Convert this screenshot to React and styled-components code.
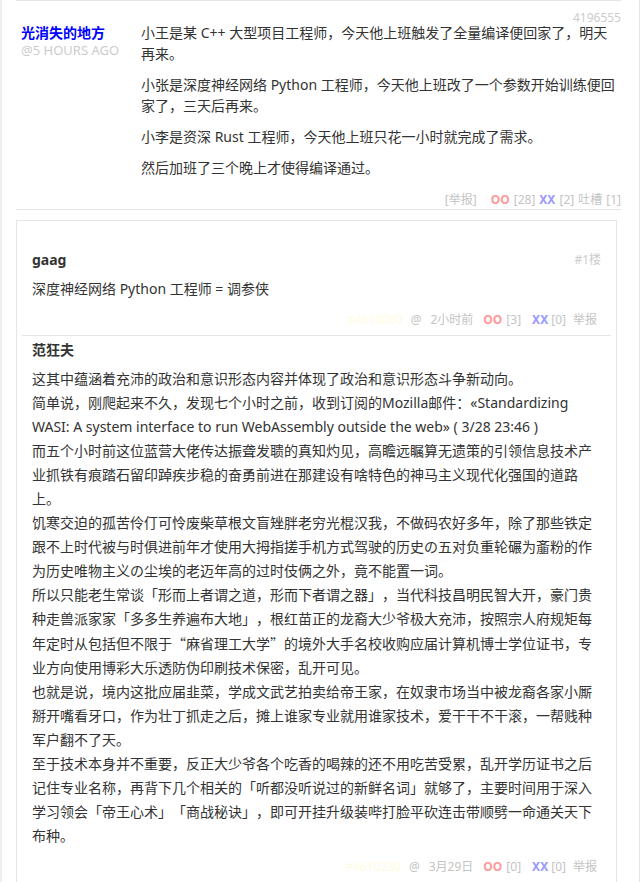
import React from "react";
import styled, { createGlobalStyle } from "styled-components";

const GlobalStyle = createGlobalStyle`
  body {
    margin: 0;
    background: #fff;
    font-family: "Noto Sans", "Noto Sans CJK SC", sans-serif;
    color: #333;
    text-spacing-trim: space-all;
  }
`;

const main = {
  id: "4196555",
  author: "光消失的地方",
  time: "@5 HOURS AGO",
  paragraphs: [
    "小王是某 C++ 大型项目工程师，今天他上班触发了全量编译便回家了，明天再来。",
    "小张是深度神经网络 Python 工程师，今天他上班改了一个参数开始训练便回家了，三天后再来。",
    "小李是资深 Rust 工程师，今天他上班只花一小时就完成了需求。",
    "然后加班了三个晚上才使得编译通过。",
  ],
  oo: 28,
  xx: 2,
  tucao: 1,
};

const replies = [
  {
    id: "4610080",
    floor: "#1楼",
    author: "gaag",
    time: "2小时前",
    oo: 3,
    xx: 0,
    lines: ["深度神经网络 Python 工程师 = 调参侠"],
  },
  {
    id: "4610230",
    author: "范狂夫",
    time: "3月29日",
    oo: 0,
    xx: 0,
    lines: [
      "这其中蕴涵着充沛的政治和意识形态内容并体现了政治和意识形态斗争新动向。",
      "简单说，刚爬起来不久，发现七个小时之前，收到订阅的Mozilla邮件：«Standardizing WASI: A system interface to run WebAssembly outside the web» ( 3/28 23:46 )",
      "而五个小时前这位蓝营大佬传达振聋发聩的真知灼见，高瞻远瞩算无遗策的引领信息技术产业抓铁有痕踏石留印踔疾步稳的奋勇前进在那建设有啥特色的神马主义现代化强国的道路上。",
      "饥寒交迫的孤苦伶仃可怜废柴草根文盲矬胖老穷光棍汉我，不做码农好多年，除了那些铁定跟不上时代被与时俱进前年才使用大拇指搓手机方式驾驶的历史の五对负重轮碾为齑粉的作为历史唯物主义の尘埃的老迈年高的过时伎俩之外，竟不能置一词。",
      "所以只能老生常谈「形而上者谓之道，形而下者谓之器」，当代科技昌明民智大开，豪门贵种走兽派家家「多多生养遍布大地」，根红苗正的龙裔大少爷极大充沛，按照宗人府规矩每年定时从包括但不限于“麻省理工大学”的境外大手名校收购应届计算机博士学位证书，专业方向使用博彩大乐透防伪印刷技术保密，乱开可见。",
      "也就是说，境内这批应届韭菜，学成文武艺拍卖给帝王家，在奴隶市场当中被龙裔各家小厮掰开嘴看牙口，作为壮丁抓走之后，摊上谁家专业就用谁家技术，爱干干不干滚，一帮贱种军户翻不了天。",
      "至于技术本身并不重要，反正大少爷各个吃香的喝辣的还不用吃苦受累，乱开学历证书之后记住专业名称，再背下几个相关的「听都没听说过的新鲜名词」就够了，主要时间用于深入学习领会「帝王心术」「商战秘诀」，即可开挂升级装哔打脸平砍连击带顺劈一命通关天下布种。",
    ],
  },
];

// curly quotes need the CJK face to stay full width
const withQuotes = (text) =>
  text.split(/([“”])/).map((part, i) =>
    part === "“" || part === "”" ? <Quote key={i}>{part}</Quote> : part
  );

const App = () => {
  return (
    <>
      <GlobalStyle />
      <Page>
        <Comment>
          <IdRow>{main.id}</IdRow>
          <Body>
            <Author>
              <AuthorName>{main.author}</AuthorName>
              <AuthorTime>{main.time}</AuthorTime>
            </Author>
            <Content>
              {main.paragraphs.map((p) => (
                <Para key={p}>{p}</Para>
              ))}
            </Content>
          </Body>
          <Footer>
            <Gray>[举报]</Gray>
            <Vote $up $gap={14}>OO</Vote>
            <Gray $gap={4}>[{main.oo}]</Gray>
            <Vote $gap={4}>XX</Vote>
            <Gray $gap={4}>[{main.xx}]</Gray>
            <Gray $gap={4}>吐槽</Gray>
            <Gray $gap={4}>[{main.tucao}]</Gray>
          </Footer>
        </Comment>

        <ReplyBox>
          {replies.map((r) => (
            <Reply key={r.id}>
              <ReplyHead>
                <ReplyName>{r.author}</ReplyName>
                {r.floor && <Floor>{r.floor}</Floor>}
              </ReplyHead>
              <ReplyText>
                {r.lines.map((line) => (
                  <div key={line}>{withQuotes(line)}</div>
                ))}
              </ReplyText>
              <ReplyFooter>
                <HiddenId>#{r.id}</HiddenId>
                <Gray $gap={8}>@</Gray>
                <Gray $gap={9}>{r.time}</Gray>
                <Vote $up $gap={10}>OO</Vote>
                <Gray $gap={4}>[{r.oo}]</Gray>
                <Vote $gap={11}>XX</Vote>
                <Gray $gap={3}>[{r.xx}]</Gray>
                <Gray $gap={7}>举报</Gray>
              </ReplyFooter>
            </Reply>
          ))}
        </ReplyBox>
      </Page>
    </>
  );
};

const Page = styled.div`
  box-sizing: border-box;
  width: 640px;
  min-height: 882px;
  padding: 0 18px 0 14px;
  border-left: 2px solid #eeeeee;
  border-right: 1px solid #e5e5e5;
`;

const Comment = styled.div`
  border-top: 1px solid #e5e5e5;
  border-bottom: 1px solid #e5e5e5;
  padding: 9px 0 0 5px;
`;

const IdRow = styled.div`
  height: 12px;
  font-size: 12px;
  line-height: 16px;
  color: #cccccc;
  text-align: right;
`;

const Body = styled.div`
  display: flex;
`;

const Author = styled.div`
  width: 120px;
  flex-shrink: 0;
`;

const AuthorName = styled.div`
  font-size: 14px;
  font-weight: bold;
  line-height: 21px;
  color: #0000ff;
`;

const AuthorTime = styled.div`
  font-size: 13px;
  line-height: 14px;
  color: #cccccc;
`;

const Content = styled.div`
  width: 478px;
`;

const Para = styled.p`
  margin: 0 0 10px;
  font-size: 14px;
  line-height: 21px;
  color: #333;

  &:last-child {
    margin-bottom: 0;
  }
`;

const Footer = styled.div`
  margin-top: 13px;
  display: flex;
  justify-content: flex-end;
  font-size: 12px;
  line-height: 18px;
`;

const Gray = styled.span`
  color: #c4c4c4;
  margin-left: ${(p) => p.$gap || 0}px;
`;

const Vote = styled.span`
  font-weight: bold;
  color: ${(p) => (p.$up ? "#ff9999" : "#9999ff")};
  margin-left: ${(p) => p.$gap || 0}px;
`;

const ReplyBox = styled.div`
  margin: 10px 4px 0 0;
  border: 1px solid #e5e5e5;
  border-bottom: none;
  padding: 25px 5px 0;
`;

const Reply = styled.div`
  padding: 2px 10px 3px;
  border-bottom: 1px solid #e5e5e5;
`;

const ReplyHead = styled.div`
  display: flex;
  justify-content: space-between;
  align-items: center;
  line-height: 24px;
`;

const ReplyName = styled.span`
  font-size: 14px;
  font-weight: bold;
  color: #333;
`;

const Floor = styled.span`
  font-size: 12px;
  color: #cccccc;
`;

const ReplyText = styled.div`
  margin-top: 5px;
  font-size: 14px;
  line-height: 24px;
  color: #333;
`;

const Quote = styled.span`
  font-family: "Noto Sans CJK SC", sans-serif;
`;

const ReplyFooter = styled.div`
  margin-top: 7px;
  display: flex;
  justify-content: flex-end;
  font-size: 12px;
  line-height: 24px;
  padding-right: 4px;
`;

const HiddenId = styled.span`
  color: #fffbe3;
`;

export default App;
